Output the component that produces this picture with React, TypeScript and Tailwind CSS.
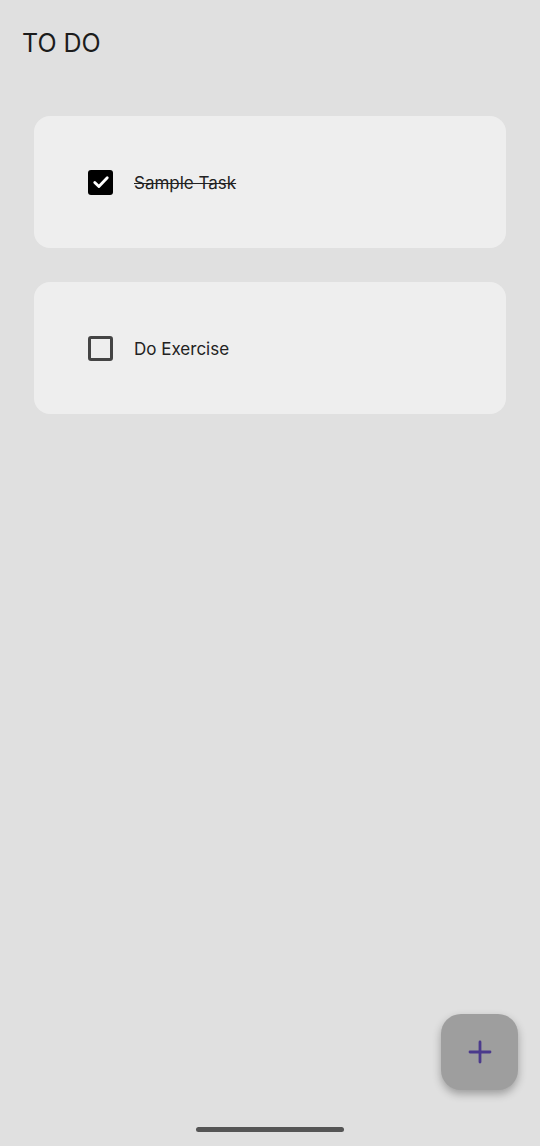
import React from "react";

function Card({ label, done }: { label: string; done: boolean }) {
  return (
    <div className="flex h-[132px] items-center rounded-[16px] bg-[#eeeeee] pl-[54px]">
      {done ? (
        <div className="flex h-[25px] w-[25px] items-center justify-center rounded-[3px] bg-black">
          <svg width="20" height="20" viewBox="0 0 24 24" fill="none" stroke="white" strokeWidth="3.4" strokeLinecap="round" strokeLinejoin="round">
            <path d="M4.5 12.5l5 5L19.5 7" />
          </svg>
        </div>
      ) : (
        <div className="h-[25px] w-[25px] rounded-[3px] border-[3px] border-[#444444]" />
      )}
      <span className={`ml-[21px] mt-[3px] text-[17px] text-[#222222] ${done ? "line-through" : ""}`}>{label}</span>
    </div>
  );
}

export default function App() {
  return (
    <div className="relative flex h-[1146px] w-[540px] flex-col bg-[#e0e0e0]" style={{ fontFamily: "Inter, 'Noto Sans', sans-serif" }}>
      <div className="pl-[22px] pt-[27px] text-[25px] leading-[32px] text-[#1c1c1c]">TO DO</div>
      <div className="mt-[57px] flex flex-col gap-[34px] px-[34px]">
        <Card label="Sample Task" done />
        <Card label="Do Exercise" done={false} />
      </div>
      <button className="absolute left-[441px] top-[1014px] flex h-[76px] w-[77px] items-center justify-center rounded-[20px] bg-[#9e9e9e] shadow-[0_4px_8px_rgba(0,0,0,0.3)]">
        <svg width="24" height="24" viewBox="0 0 24 24" fill="none" stroke="#4b3a8c" strokeWidth="2.8" strokeLinecap="round">
          <path d="M12 2v20M2 12h20" />
        </svg>
      </button>
      <div className="absolute left-[196px] top-[1127px] h-[5px] w-[148px] rounded-full bg-[#555555]" />
    </div>
  );
}
